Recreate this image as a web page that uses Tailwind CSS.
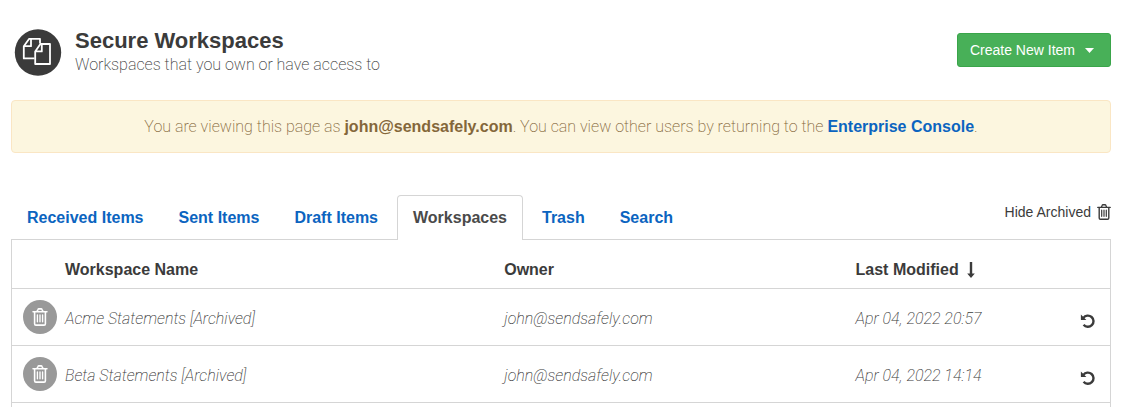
<!DOCTYPE html>
<html lang="en">
<head>
<meta charset="utf-8">
<meta name="viewport" content="width=device-width, initial-scale=1">
<title>Secure Workspaces</title>
<script src="https://cdn.jsdelivr.net/npm/@tailwindcss/browser@4"></script>
</head>
<body class="bg-white pl-[11px] pr-[15px] font-['Liberation_Sans',sans-serif] text-base text-[#3b3b3b]">
<svg class="hidden" aria-hidden="true">
  <symbol id="trash" viewBox="0 0 14 16">
    <g fill="none" stroke="currentColor" stroke-width="1.4" stroke-linecap="round" stroke-linejoin="round">
      <path d="M.8 3.4H13.2M4.3 3.2 5.2 1.3Q5.4 .8 6 .8H8Q8.6 .8 8.8 1.3L9.7 3.2M2.2 3.6V13.9Q2.2 15.2 3.4 15.2H10.6Q11.8 15.2 11.8 13.9V3.6"/>
      <path stroke-width="1.2" d="M4.7 6.2V12.3M7 6.2V12.3M9.3 6.2V12.3"/>
    </g>
  </symbol>
  <symbol id="undo" viewBox="0 0 16 16">
    <path fill="none" stroke="currentColor" stroke-width="2.4" d="M3.4 4.9A5.6 5.6 0 1 1 3.6 11.8"/>
    <path fill="currentColor" d="M.9 1.4V6.5Q.9 7 1.4 7H6.4Z"/>
  </symbol>
</svg>
<header class="flex items-start justify-between pt-[29px]">
  <div class="flex items-start gap-[13px] pl-[3px]">
    <svg class="size-12 shrink-0" viewBox="0 0 48 48" aria-hidden="true">
      <circle cx="24" cy="23.500" r="23.200" fill="#3b3b3b"/>
      <g fill="none" stroke="#fff" stroke-width="1.800" stroke-linejoin="round">
        <path d="M20.500 29.400H9.800V17.200L15.200 9.800H26V14.600M9.800 17.200H17V9.800"/>
        <path d="M21.200 22.400 26.400 15H36V35H21.200ZM21.200 22.400H27.800V15"/>
      </g>
    </svg>
    <div>
      <h1 class="text-[22px] leading-6 font-bold">Secure Workspaces</h1>
      <p class="font-['Roboto',sans-serif] font-extralight leading-6">Workspaces that you own or have access to</p>
    </div>
  </div>
  <button type="button" class="mt-1 flex h-[34px] items-center gap-2.5 rounded-[3px] border border-[#3aa54a] bg-[#48b058] pl-3 pr-4 text-sm text-white">Create New Item
    <svg class="h-[5px] w-[9px]" viewBox="0 0 9 5" aria-hidden="true"><path fill="currentColor" d="M0 0H9L4.500 5Z"/></svg>
  </button>
</header>
<p class="mt-[23px] rounded-[4px] border border-[#fae6c4] bg-[#fcf6df] pt-[14px] pb-[13px] text-center font-['Roboto',sans-serif] font-extralight leading-6 text-[#84673a]">You are viewing this page as <strong class="font-['Liberation_Sans',sans-serif] font-bold">john@sendsafely.com</strong>. You can view other users by returning to the <a href="#" class="font-['Liberation_Sans',sans-serif] font-bold text-[#0b64c0]">Enterprise Console</a>.</p>
<div class="mt-[42px] flex items-start justify-between">
  <nav class="flex gap-[3px] font-bold leading-6 text-[#0b64c0]">
    <a href="#" class="border border-transparent px-[15px] pt-2.5 pb-2">Received Items</a>
    <a href="#" class="border border-transparent px-[15px] pt-2.5 pb-2">Sent Items</a>
    <a href="#" class="border border-transparent px-[15px] pt-2.5 pb-2">Draft Items</a>
    <a href="#" aria-current="page" class="z-10 -mb-px rounded-t-[4px] border border-b-0 border-[#d5d5d5] bg-white px-[15px] pt-2.5 pb-2.5 text-[#4a4a4a]">Workspaces</a>
    <a href="#" class="border border-transparent px-[15px] pt-2.5 pb-2">Trash</a>
    <a href="#" class="border border-transparent px-[15px] pt-2.5 pb-2">Search</a>
  </nav>
  <button type="button" class="mt-[7px] flex items-center gap-1.5 text-sm">Hide Archived
    <svg class="h-4 w-[14px]" aria-hidden="true"><use href="#trash"/></svg>
  </button>
</div>
<main class="border border-b-0 border-[#d5d5d5] pb-1">
  <table class="w-full table-fixed text-left">
    <colgroup><col class="w-[53px]"><col class="w-[40%]"><col class="w-[32%]"><col><col class="w-10"></colgroup>
    <thead>
      <tr class="h-12 border-b border-[#d5d5d5]">
        <td></td>
        <th class="pt-3">Workspace Name</th>
        <th class="pt-3">Owner</th>
        <th class="pt-3"><button type="button" class="flex items-center gap-2 font-bold">Last Modified
          <svg class="h-4 w-2" viewBox="0 0 8 16" aria-hidden="true"><path fill="currentColor" d="M2.800 0H5.200V11.500H7.800L4 16 .2 11.500H2.800Z"/></svg></button></th>
        <td></td>
      </tr>
    </thead>
    <tbody class="font-['Roboto',sans-serif] font-extralight italic">
      <tr class="h-[57px] border-b border-[#d5d5d5]">
        <td class="pl-[11px]"><span class="flex size-[34px] items-center justify-center rounded-full bg-[#999] text-white"><svg class="h-[18px] w-4" aria-hidden="true"><use href="#trash"/></svg></span></td>
        <td class="pt-1">Acme Statements [Archived]</td>
        <td class="pt-1">john@sendsafely.com</td>
        <td class="pt-1">Apr 04, 2022 20:57</td>
        <td class="pt-2"><button type="button" aria-label="Restore Acme Statements" class="ml-2.5 flex"><svg class="size-4" aria-hidden="true"><use href="#undo"/></svg></button></td>
      </tr>
      <tr class="h-[57px] border-b border-[#d5d5d5]">
        <td class="pl-[11px]"><span class="flex size-[34px] items-center justify-center rounded-full bg-[#999] text-white"><svg class="h-[18px] w-4" aria-hidden="true"><use href="#trash"/></svg></span></td>
        <td class="pt-1">Beta Statements [Archived]</td>
        <td class="pt-1">john@sendsafely.com</td>
        <td class="pt-1">Apr 04, 2022 14:14</td>
        <td class="pt-2"><button type="button" aria-label="Restore Beta Statements" class="ml-2.5 flex"><svg class="size-4" aria-hidden="true"><use href="#undo"/></svg></button></td>
      </tr>
    </tbody>
  </table>
</main>
</body>
</html>
